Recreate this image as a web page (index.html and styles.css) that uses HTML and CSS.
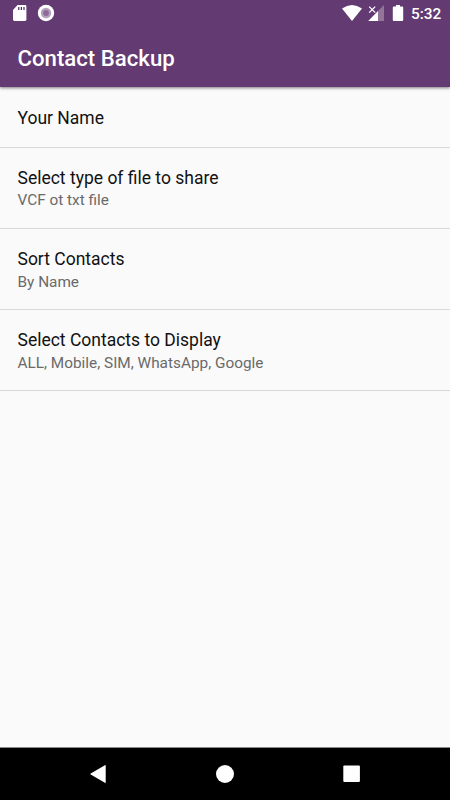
FILE: index.html
```html
<!DOCTYPE html>
<html lang="en">
<head>
<meta charset="utf-8">
<title>Contact Backup</title>
<link rel="stylesheet" href="styles.css">
</head>
<body>
<header class="header">
  <div class="status">
    <svg class="status-left" width="60" height="26" viewBox="0 0 60 26">
      <path fill="#fff" d="M17.600 5H25a1.400 1.400 0 0 1 1.400 1.400v13.200A1.400 1.400 0 0 1 25 21H14.400a1.400 1.400 0 0 1-1.400-1.400V10z"/>
      <path stroke="#4a245c" stroke-width="1.200" d="M18.800 7v3M21.400 7v3M24 7v3"/>
      <circle cx="46" cy="13" r="8.200" fill="#fff"/>
      <circle cx="46" cy="13" r="5.200" fill="#b5a0bd"/>
      <circle cx="46" cy="13" r="2.900" fill="#8c6b98"/>
    </svg>
    <svg class="status-right" width="70" height="26" viewBox="340 0 70 26">
      <path fill="#fff" d="M342 8.600Q352 1.600 362 8.600L352 21z"/>
      <path fill="#927599" d="M384 5v16h-6V11z"/>
      <path fill="#fff" d="M378 11v10h-9.800z"/>
      <path fill="none" stroke="#633a72" stroke-width="2.400" d="M369 6.300l6.500 6.500M375.500 6.300l-6.500 6.500"/>
      <path fill="none" stroke="#fff" stroke-width="1.300" d="M369.200 6.600l6 6M375.200 6.600l-6 6"/>
      <path fill="#fff" d="M396 5h4v1.500h2.200q1 0 1 1V20q0 1-1 1h-8.400q-1 0-1-1V7.500q0-1 1-1h2.200z"/>
    </svg>
    <span class="clock">5:32</span>
  </div>
  <h1 class="title">Contact Backup</h1>
</header>
<main class="list">
  <section class="item item-single"><div class="name">Your Name</div></section>
  <section class="item"><div class="name">Select type of file to share</div><div class="summary">VCF ot txt file</div></section>
  <section class="item"><div class="name">Sort Contacts</div><div class="summary summary-low">By Name</div></section>
  <section class="item"><div class="name">Select Contacts to Display</div><div class="summary summary-low">ALL, Mobile, SIM, WhatsApp, Google</div></section>
</main>
<nav class="nav">
  <svg width="20" height="20" viewBox="0 0 20 20"><path fill="#fff" d="M17.700 1.600v16.800q0 .8-.8.400L2.700 10.500q-.9-.5 0-1L16.900 1.200q.8-.4.800.4z"/></svg>
  <svg width="20" height="20" viewBox="0 0 20 20"><circle cx="10" cy="10" r="9" fill="#fff"/></svg>
  <svg width="20" height="20" viewBox="0 0 20 20"><rect x="1.300" y="1.500" width="16.600" height="16.600" rx="1" fill="#fff"/></svg>
</nav>
</body>
</html>
```
FILE: styles.css
```css
* { box-sizing: border-box; }

body {
  margin: 0;
  height: 800px;
  display: flex;
  flex-direction: column;
  overflow: hidden;
  background: #fafafa;
  font-family: Roboto, sans-serif;
}

.header {
  position: relative;
  height: 87px;
  background: #633a72;
  color: #fff;
  box-shadow: 0 1px 3px rgba(0, 0, 0, .5);
}

.status {
  display: flex;
  height: 26px;
}

.status-right { margin-left: auto; }

.clock {
  width: 40px;
  padding-left: 1px;
  font-size: 15.400px;
  font-weight: 500;
  line-height: 28px;
}

.title {
  margin: 0;
  padding-left: 17.500px;
  font-size: 22.200px;
  font-weight: 500;
  line-height: 65px;
}

.list { flex: 1; }

.item {
  height: 81px;
  padding: 19px 17.500px 0;
  border-bottom: 1px solid #d9d9d9;
}

.item-single {
  height: 61px;
  padding-top: 20px;
}

.name {
  color: #111;
  font-size: 17.500px;
  line-height: 23px;
}

.summary {
  color: #6a6a6a;
  font-size: 15.350px;
  line-height: 21px;
}

.summary-low { line-height: 23px; }

.nav {
  height: 53px;
  padding: 16px 88px 0;
  display: flex;
  justify-content: space-between;
  background: #000;
  border-top: 1px solid #888;
}
```
